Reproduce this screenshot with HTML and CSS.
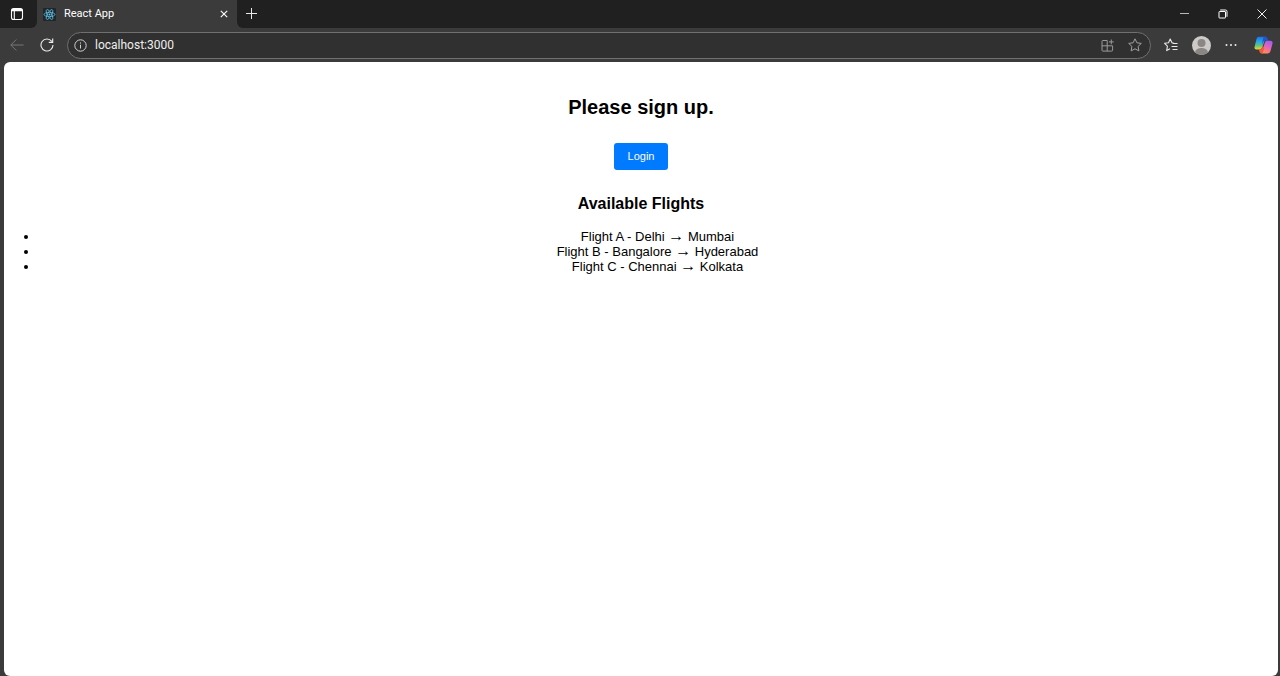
FILE: index.html
```html
<!DOCTYPE html>
<html lang="en">
<head>
<meta charset="utf-8">
<title>React App</title>
<link rel="stylesheet" href="styles.css">
</head>
<body>
<div class="browser">
  <header class="tab-strip">
    <div class="tab-actions">
      <button class="icon-button" aria-label="Tab actions">
        <svg width="14" height="14" viewBox="0 0 14 14" fill="none" stroke="#fff" stroke-width="1.1"><rect x="1.5" y="1.5" width="11" height="11" rx="2"/><path d="M2 2.6h10M2 3.6h10" stroke-width="1.4"/><path d="M4.3 4v8.4"/></svg>
      </button>
    </div>
    <div class="tab">
      <svg class="favicon" width="13" height="13" viewBox="0 0 13 13" fill="none" stroke="#61c9e6" stroke-width=".75"><rect width="13" height="13" rx="1" fill="#20262d" stroke="none"/><ellipse cx="6.5" cy="6.5" rx="5.5" ry="2.1"/><ellipse cx="6.5" cy="6.5" rx="5.5" ry="2.1" transform="rotate(60 6.5 6.5)"/><ellipse cx="6.5" cy="6.5" rx="5.5" ry="2.1" transform="rotate(120 6.5 6.5)"/><circle cx="6.5" cy="6.5" r="1" fill="#61c9e6" stroke="none"/></svg>
      <span class="tab-title">React App</span>
      <button class="icon-button" aria-label="Close tab">
        <svg width="8" height="8" viewBox="0 0 8 8" stroke="#fff" stroke-width="1.1"><path d="M.8.8l6.4 6.4M7.2.8L.8 7.2"/></svg>
      </button>
    </div>
    <div class="new-tab">
      <button class="icon-button" aria-label="New tab">
        <svg width="12" height="12" viewBox="0 0 12 12" stroke="#e8e8e8"><path d="M5.5 0v11M0 5.5h11"/></svg>
      </button>
    </div>
    <div class="window-controls">
      <button class="icon-button" aria-label="Minimize"><svg width="9" height="9" viewBox="0 0 9 9" stroke="#b8b8b8"><path d="M0 3.5h9"/></svg></button>
      <button class="icon-button" aria-label="Restore"><svg width="10" height="10" viewBox="0 0 10 10" fill="none" stroke="#fff"><rect x="1" y="2.5" width="6.5" height="6.5" rx=".5"/><path d="M2.2 1h5.3q1.5 0 1.5 1.5v5.3"/></svg></button>
      <button class="icon-button" aria-label="Close"><svg width="10" height="10" viewBox="0 0 10 10" stroke="#eee"><path d="M.5.5l9 9M9.5.5l-9 9"/></svg></button>
    </div>
  </header>
  <nav class="toolbar">
    <div class="nav-buttons">
      <button class="icon-button" aria-label="Back" disabled><svg width="14" height="12" viewBox="0 0 14 12" fill="none" stroke="#777"><path d="M13.6 6H.8M6.3.5L.8 6l5.5 5.5"/></svg></button>
      <button class="icon-button" aria-label="Refresh"><svg width="14" height="14" viewBox="0 0 14 14" fill="none" stroke="#eee" stroke-width="1.1"><path d="M13 7A6 6 0 1 1 11.8 3.4M12.7.4v4H8.8"/></svg></button>
    </div>
    <div class="address-bar">
      <svg width="13" height="13" viewBox="0 0 13 13" fill="none" stroke="#d0d0d0"><circle cx="6.5" cy="6.5" r="5.7"/><path d="M6.5 5.7v3.8M6.5 3.4v1.2"/></svg>
      <input class="address" type="text" aria-label="Address" value="localhost:3000">
      <button class="icon-button" aria-label="Install app"><svg width="13" height="13" viewBox="0 0 13 13" fill="none" stroke="#999"><path d="M6.2 1.5H1.8q-.8 0-.8.8v9q0 .8.8.8h9q.8 0 .8-.8V6.8H1M6.2 1.5v10.6M10.3.5v4.8M7.9 2.9h4.8"/></svg></button>
      <button class="icon-button" aria-label="Add to favorites"><svg width="14" height="14" viewBox="0 0 14 14" fill="none" stroke="#a0a0a0" stroke-linejoin="round"><path d="M7 .8l1.9 4 4.4.6-3.2 3 .8 4.5L7 10.8l-3.9 2.1.8-4.5-3.2-3 4.4-.6z"/></svg></button>
    </div>
    <div class="tools">
      <button class="icon-button" aria-label="Favorites"><svg width="14" height="14" viewBox="0 0 14 14" fill="none" stroke="#e8e8e8" stroke-width="1.1" stroke-linejoin="round"><path d="M9.8 5L8 4.8 6.2 1 4.5 4.8.6 5.3l2.8 2.8-.7 4.5L6 10.7M8.5 5.5h5M7.5 8.5h6M8.5 11.5h5"/></svg></button>
      <button class="icon-button" aria-label="Profile"><svg width="19" height="19" viewBox="0 0 19 19"><defs><clipPath id="face"><circle cx="9.5" cy="9.5" r="9.5"/></clipPath></defs><g clip-path="url(#face)"><path fill="#cdcac8" d="M0 0h19v19H0z"/><circle cx="9.5" cy="7" r="4" fill="#8b8785"/><ellipse cx="9.5" cy="16.5" rx="6.5" ry="4.5" fill="#8b8785"/></g></svg></button>
      <button class="icon-button" aria-label="Settings and more"><svg width="12" height="4" viewBox="0 0 12 4" fill="#eee"><circle cx="1.5" cy="2" r="1"/><circle cx="6" cy="2" r="1"/><circle cx="10.5" cy="2" r="1"/></svg></button>
      <button class="icon-button copilot" aria-label="Copilot"><svg width="19" height="18" viewBox="0 0 19 18"><defs><linearGradient id="cool" x1="0" y1="0" x2="0" y2="1"><stop stop-color="#1b74e8"/><stop offset=".4" stop-color="#28a8ea"/><stop offset=".7" stop-color="#62c57b"/><stop offset="1" stop-color="#efd42b"/></linearGradient><linearGradient id="warm" x1=".7" y1="0" x2=".3" y2="1"><stop stop-color="#a55cf0"/><stop offset=".5" stop-color="#e766b5"/><stop offset="1" stop-color="#ff914f"/></linearGradient></defs><path fill="url(#cool)" d="M4.8.8H12L8.2 11.6Q7.6 13.4 5.8 13.4H2.4Q-.1 13.4.6 10.8L2.5 3Q3 .8 4.8.8z"/><path fill="#2456c8" d="M9.4.8h2.1q1.7 0 2.2 1.9l.6 2.1h-3.4q-1.3 0-1.8 1.4L7.8 9z"/><path fill="url(#warm)" d="M13.1 4.8h3.3q2.7 0 2.1 2.6l-2 7.6q-.6 2.4-2.6 2.4H7.4l3.5-10.8q.5-1.8 2.2-1.8z"/><path fill="#f25a43" d="M4.8 13.4h1q1.8 0 2.4-1.8l.8-2.2 1.3 3.1-1.4 4.1q-.3.8-1.5.8-1.5 0-1.9-1.6z"/></svg></button>
    </div>
  </nav>
  <main class="page">
    <h2 class="greeting">Please sign up.</h2>
    <button class="login">Login</button>
    <h3 class="section-title">Available Flights</h3>
    <ul class="flights">
      <li>Flight A - Delhi <span class="arrow">→</span> Mumbai</li>
      <li>Flight B - Bangalore <span class="arrow">→</span> Hyderabad</li>
      <li>Flight C - Chennai <span class="arrow">→</span> Kolkata</li>
    </ul>
  </main>
</div>
</body>
</html>
```
FILE: styles.css
```css
* { box-sizing: border-box; }

body {
  margin: 0;
  background: #3b3b3b;
  font-family: "Liberation Sans", Arial, sans-serif;
}

.browser {
  display: flex;
  flex-direction: column;
  min-height: 100vh;
}

.icon-button {
  display: flex;
  padding: 0;
  border: 0;
  background: none;
}

.tab-strip {
  display: flex;
  height: 28px;
  background: #3b3b3b;
}

.tab-actions,
.new-tab,
.window-controls {
  display: flex;
  align-items: center;
  background: #202020;
}

.tab-actions {
  width: 37px;
  padding-left: 10px;
  border-bottom-right-radius: 6px;
}

.tab {
  display: flex;
  align-items: center;
  width: 200px;
  padding: 0 9px 0 6px;
  color: #fff;
  font: 11px/16px Roboto, sans-serif;
  background: #3b3b3b;
}

.tab-title {
  flex: 1;
  padding-left: 8px;
}

.new-tab {
  flex: 1;
  padding-left: 9px;
  border-bottom-left-radius: 6px;
}

.window-controls {
  gap: 29px;
  padding-right: 13px;
}

.toolbar {
  display: flex;
  align-items: center;
  height: 34px;
  padding: 0 7px 0 10px;
}

.nav-buttons {
  display: flex;
  align-items: center;
  gap: 16px;
  width: 57px;
}

.address-bar {
  display: flex;
  flex: 1;
  align-items: center;
  gap: 14px;
  height: 27px;
  padding: 0 8px 0 6px;
  border: 1px solid #707070;
  border-radius: 14px;
  background: #303030;
}

.address {
  flex: 1;
  min-width: 0;
  margin-left: -6px;
  padding: 0;
  border: 0;
  outline: 0;
  color: #eee;
  background: none;
  font: 12px/16px Roboto, sans-serif;
}

.tools {
  display: flex;
  align-items: center;
  gap: 14px;
  padding-left: 13px;
}

.copilot {
  margin-left: 3px;
}

.page {
  flex: 1;
  margin: 0 2px 0 4px;
  padding: 33px 0 16px;
  border-radius: 6px;
  background: #fff;
  color: #000;
  font-size: 13px;
  line-height: 15px;
  text-align: center;
}

.greeting {
  margin: 0 0 24px;
  font-size: 20px;
  line-height: 24px;
}

.login {
  padding: 5px 14px;
  border: 0;
  border-radius: 3px;
  background: #007bff;
  color: #fff;
  font: 11px/17px "Liberation Sans", Arial, sans-serif;
}

.section-title {
  margin: 24px 0 15px;
  font-size: 16px;
  line-height: 20px;
}

.flights {
  margin: 0;
  padding: 0 2px 0 35px;
}

.arrow {
  font-size: 16px;
  line-height: 0;
}
```
